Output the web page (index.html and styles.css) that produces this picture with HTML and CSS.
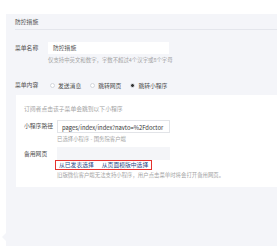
FILE: index.html
```html
<!DOCTYPE html>
<html lang="zh">
<head>
  <meta charset="UTF-8" />
  <meta name="viewport" content="width=device-width, initial-scale=1" />
  <title>菜单编辑</title>
  <link rel="stylesheet" href="styles.css">
</head>
<body>

  <div class="panel">
    <div class="panel-titulo">防控措施</div>

    <div class="fila fila-nombre">
      <span class="etiqueta">菜单名称</span>
      <div class="campo">
        <div class="entrada">防控措施</div>
        <div class="ayuda">仅支持中英文和数字，字数不超过4个汉字或8个字母</div>
      </div>
    </div>

    <div class="fila fila-contenido">
      <span class="etiqueta">菜单内容</span>
      <div class="radios">
        <label class="radio"><i></i>发送消息</label>
        <label class="radio"><i></i>跳转网页</label>
        <label class="radio activo"><i></i>跳转小程序</label>
      </div>
    </div>

    <!-- Tarjeta del mini programa -->
    <div class="tarjeta">
      <p class="aviso">订阅者点击该子菜单会跳到以下小程序</p>

      <div class="fila fila-ruta">
        <span class="etiqueta">小程序路径</span>
        <div class="campo">
          <div class="entrada">pages/index/index?navto=%2Fdoctor</div>
          <div class="ayuda">已选择小程序 - 国务院客户端</div>
        </div>
      </div>

      <div class="fila fila-web">
        <span class="etiqueta">备用网页</span>
        <div class="campo">
          <div class="entrada gris"></div>
          <div class="opciones">
            <a href="#">从已发表选择</a>
            <a href="#">从页面模版中选择</a>
          </div>
          <div class="ayuda">旧版微信客户端无法支持小程序，用户点击菜单时将会打开备用网页。</div>
        </div>
      </div>
    </div>
  </div>

</body>
</html>
```

FILE: styles.css
```css
:root {
  --fondo-panel: #f4f5f9;
  --linea: #e4e6ec;
  --texto: #4d4d4d;
  --texto-suave: #a3a3a3;
  --azul: #2d4a86;
  --rojo: #e5322d;
}

* {
  margin: 0;
  padding: 0;
  box-sizing: border-box;
}

body {
  font-family: "Noto Sans CJK SC", "Noto Sans", sans-serif;
  font-size: 5.8px;
  color: var(--texto);
  background: #fff;
  overflow: hidden;
  width: 277px;
  height: 248px;
}

.panel {
  position: relative;
  margin: 14px 0 0 6px;
  width: 271px;
  height: 232px;
  background: var(--fondo-panel);
  padding: 0 0 0 9px;
}

/* flechita a la izquierda */
.panel::before {
  content: '';
  position: absolute;
  left: -4px;
  top: 219px;
  border-right: 4px solid var(--fondo-panel);
  border-top: 4px solid transparent;
  border-bottom: 4px solid transparent;
}

.panel-titulo {
  height: 16px;
  line-height: 16px;
  border-bottom: 1px solid var(--linea);
}

.fila {
  display: flex;
  align-items: flex-start;
}

.etiqueta {
  width: 33px;
  flex-shrink: 0;
  line-height: 12px;
}

.campo {
  display: flex;
  flex-direction: column;
}

.entrada {
  width: 121px;
  height: 12px;
  line-height: 12px;
  background: #fff;
  padding-left: 5px;
  white-space: nowrap;
  overflow: hidden;
}

.entrada.gris {
  background: #f4f5f8;
  width: 113px;
  height: 13px;
}

.ayuda {
  font-size: 5.4px;
  color: var(--texto-suave);
  line-height: 8px;
  margin-top: 2px;
  white-space: nowrap;
}

.fila-nombre {
  margin-top: 12px;
}

.fila-contenido {
  margin-top: 15px;
  align-items: center;
}

.radios {
  display: flex;
  gap: 9px;
  margin-left: 2px;
}

.radio {
  display: flex;
  align-items: center;
  gap: 3px;
}

.radio i {
  width: 5px;
  height: 5px;
  border: 0.6px solid #d3d6dc;
  border-radius: 50%;
  background: #fff;
}

.radio.activo i {
  background: radial-gradient(circle, #333 0 1.4px, #fff 1.6px);
}

.tarjeta {
  background: #fff;
  margin: 4px 0 0 1px;
  padding: 10px 0 12px 8px;
  height: 92px;
}

.aviso {
  color: var(--texto-suave);
  line-height: 8px;
}

.fila-ruta {
  margin-top: 7px;
}

.fila-ruta .entrada {
  width: 113px;
  height: 13px;
  line-height: 13px;
  border: 0.6px solid #e2e4e8;
  padding-left: 4px;
  color: #333;
}

.fila-web {
  margin-top: 4px;
}

.fila-web .etiqueta {
  line-height: 13px;
}

.opciones {
  display: flex;
  gap: 8px;
  width: 97px;
  height: 10px;
  margin-left: -2px;
  padding-left: 3px;
  border: 1px solid var(--rojo);
  line-height: 8px;
}

.opciones a {
  color: var(--azul);
  text-decoration: none;
}

.fila-web .ayuda {
  margin-top: 1px;
}
```
